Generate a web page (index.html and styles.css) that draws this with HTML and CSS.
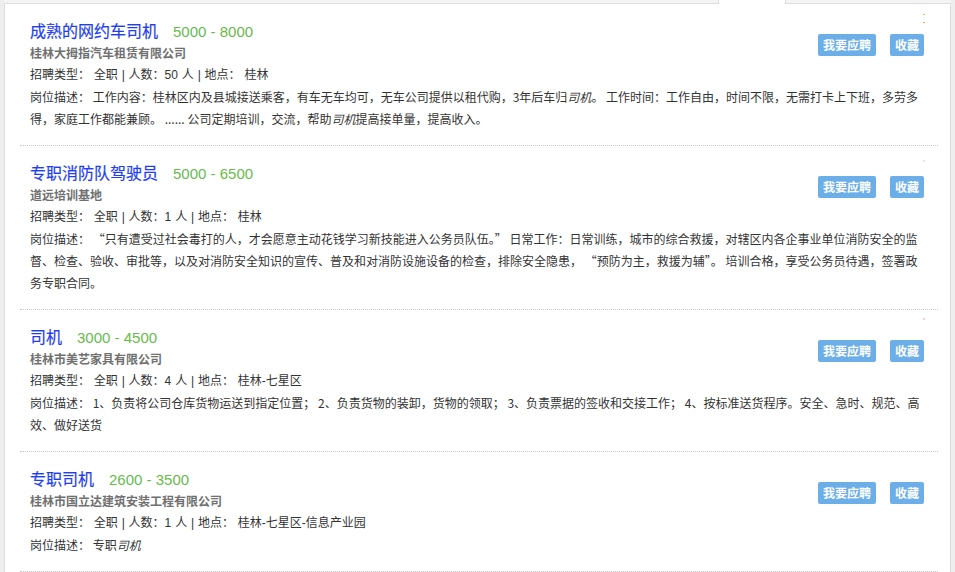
FILE: index.html
```html
<!DOCTYPE html>
<html lang="zh-CN">
<head>
<meta charset="utf-8">
<title>职位列表</title>
<link rel="stylesheet" href="styles.css">
</head>
<body>
<div class="page">
  <div class="tabs">
    <div class="tab-fill"></div>
    <div class="tab-active"></div>
    <div class="tab-fill tab-right"></div>
  </div>
  <div class="panel">
    <ul class="jobs">
      <li class="job">
        <span class="mark mark-orange"></span>
        <div class="job-head">
          <div class="job-info">
            <div class="job-title"><a class="job-name" href="#">成熟的网约车司机</a><span class="salary">5000 - 8000</span></div>
            <div class="company">桂林大拇指汽车租赁有限公司</div>
            <div class="meta">招聘类型： 全职 | 人数：50 人 | 地点： 桂林</div>
          </div>
          <div class="actions"><button class="btn">我要应聘</button><button class="btn">收藏</button></div>
        </div>
        <p class="desc">岗位描述： 工作内容：桂林区内及县城接送乘客，有车无车均可，无车公司提供以租代购，3年后车归<em>司机</em>。 工作时间：工作自由，时间不限，无需打卡上下班，多劳多得，家庭工作都能兼顾。 ...... 公司定期培训，交流，帮助<em>司机</em>提高接单量，提高收入。</p>
      </li>
      <li class="job">
        <span class="mark mark-gray"></span>
        <div class="job-head">
          <div class="job-info">
            <div class="job-title"><a class="job-name" href="#">专职消防队驾驶员</a><span class="salary">5000 - 6500</span></div>
            <div class="company">道远培训基地</div>
            <div class="meta">招聘类型： 全职 | 人数：1 人 | 地点： 桂林</div>
          </div>
          <div class="actions"><button class="btn">我要应聘</button><button class="btn">收藏</button></div>
        </div>
        <p class="desc">岗位描述：  “只有遭受过社会毒打的人，才会愿意主动花钱学习新技能进入公务员队伍。” 日常工作：日常训练，城市的综合救援，对辖区内各企事业单位消防安全的监督、检查、验收、审批等，以及对消防安全知识的宣传、普及和对消防设施设备的检查，排除安全隐患， “预防为主，救援为辅”。 培训合格，享受公务员待遇，签署政务专职合同。</p>
      </li>
      <li class="job">
        <span class="mark mark-pink"></span>
        <div class="job-head">
          <div class="job-info">
            <div class="job-title"><a class="job-name" href="#">司机</a><span class="salary">3000 - 4500</span></div>
            <div class="company">桂林市美艺家具有限公司</div>
            <div class="meta">招聘类型： 全职 | 人数：4 人 | 地点： 桂林-七星区</div>
          </div>
          <div class="actions"><button class="btn">我要应聘</button><button class="btn">收藏</button></div>
        </div>
        <p class="desc">岗位描述： 1、负责将公司仓库货物运送到指定位置； 2、负责货物的装卸，货物的领取； 3、负责票据的签收和交接工作； 4、按标准送货程序。安全、急时、规范、高效、做好送货</p>
      </li>
      <li class="job">
        <div class="job-head">
          <div class="job-info">
            <div class="job-title"><a class="job-name" href="#">专职司机</a><span class="salary">2600 - 3500</span></div>
            <div class="company">桂林市国立达建筑安装工程有限公司</div>
            <div class="meta">招聘类型： 全职 | 人数：1 人 | 地点： 桂林-七星区-信息产业园</div>
          </div>
          <div class="actions"><button class="btn">我要应聘</button><button class="btn">收藏</button></div>
        </div>
        <p class="desc">岗位描述： 专职<em>司机</em></p>
      </li>
    </ul>
  </div>
</div>
</body>
</html>
```

FILE: styles.css
```css
html, body {
  margin: 0;
  padding: 0;
  height: 100%;
  overflow: hidden;
}
body {
  background: #eeeeee;
  font-family: "Noto Sans CJK SC", "Liberation Sans", sans-serif;
  font-size: 12px;
  color: #333;
}
.page {
  padding: 0 4px;
}
.tabs {
  display: flex;
  height: 4px;
}
.tab-fill {
  flex: 1;
  background: #f4f4f4;
  border-bottom: 1px solid #dddddd;
}
.tab-right {
  flex: 0 0 165px;
}
.tab-active {
  flex: 0 0 66px;
  background: #fff;
  border-left: 1px solid #dddddd;
  border-right: 1px solid #dddddd;
}
.panel {
  background: #fff;
  border-left: 1px solid #dddddd;
  border-right: 1px solid #dddddd;
}
.jobs {
  list-style: none;
  margin: 0 12px 0 15px;
  padding: 0;
}
.job {
  position: relative;
  padding: 14px 10px 15px 10px;
  border-bottom: 1px dotted #c8c8c8;
}
.job-head {
  display: flex;
  justify-content: space-between;
  align-items: flex-start;
}
.job-title {
  line-height: 24px;
  height: 24px;
  white-space: nowrap;
}
.job-name {
  font-size: 16px;
  color: #1f3ef2;
  text-decoration: none;
  -webkit-text-stroke: 0.2px #1f3ef2;
}
.salary {
  margin-left: 15px;
  font-family: "Liberation Sans", sans-serif;
  font-size: 15px;
  color: #66bc4c;
}
.company {
  line-height: 22px;
  color: #707070;
  font-weight: bold;
}
.meta {
  line-height: 22px;
  color: #333;
  font-family: "Liberation Sans", "Noto Sans CJK SC", sans-serif;
  word-spacing: 0.5px;
}
.actions {
  display: flex;
  gap: 14px;
  padding-top: 16px;
  margin-right: 4px;
}
.btn {
  height: 22px;
  padding: 0 5px;
  border: none;
  border-radius: 2px;
  background: #6caee8;
  color: #fff;
  font-family: "Noto Sans CJK SC", sans-serif;
  font-size: 12px;
  font-weight: bold;
  line-height: 22px;
  cursor: pointer;
}
.desc {
  margin: 0;
  line-height: 22px;
  color: #333;
}
.desc em {
  font-style: italic;
}
.mark {
  position: absolute;
  top: 10px;
  right: 13px;
  width: 2px;
  height: 7px;
}
.mark-orange {
  border-top: 1px solid #f0b070;
  border-bottom: 1px solid #f0a060;
}
.mark-gray {
  top: 14px;
  height: 2px;
  background: #e8e8e8;
}
.mark-pink {
  top: 8px;
  height: 2px;
  background: #f0d0dc;
}
```
